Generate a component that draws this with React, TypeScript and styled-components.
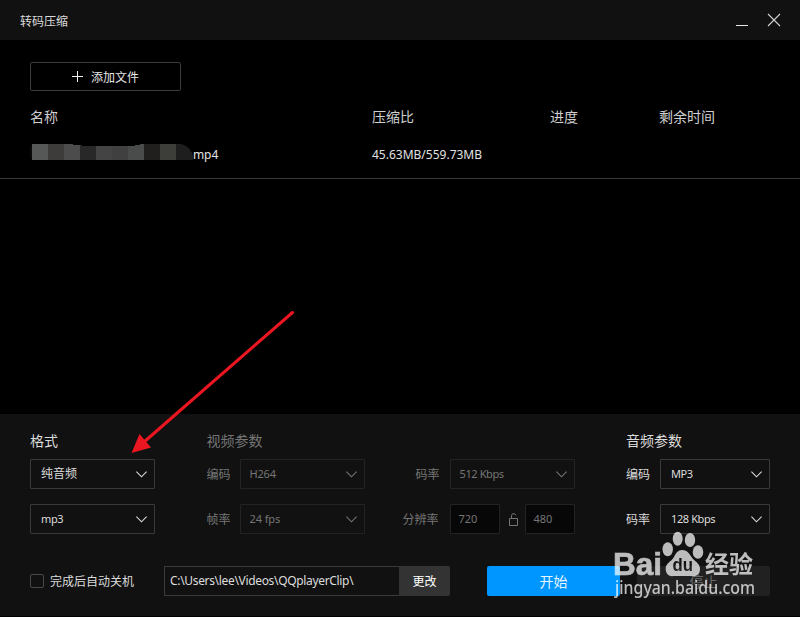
import React from "react";
import styled, { createGlobalStyle } from "styled-components";

const GlobalStyle = createGlobalStyle`
  * { box-sizing: border-box; }
  body {
    margin: 0;
    background: #000;
    font-family: "Noto Sans", "Noto Sans CJK SC", sans-serif;
    font-size: 12px;
    color: #dcdcdc;
  }
`;

const Window = styled.main`
  position: relative;
  display: flex;
  flex-direction: column;
  width: 800px;
  height: 617px;
  overflow: hidden;
  background: #000;
`;

const TitleBar = styled.header`
  display: flex;
  justify-content: space-between;
  align-items: center;
  height: 40px;
  padding: 0 19px 0 20px;
  background: #111;
`;

const Text = styled.span<{ $size?: number; $track?: number; $shift?: number; $cjk?: boolean }>`
  display: block;
  font-family: ${(p) => (p.$cjk ? '"Noto Sans CJK SC"' : '"Noto Sans", "Noto Sans CJK SC"')}, sans-serif;
  font-size: ${(p) => p.$size ?? 12}px;
  line-height: 20px;
  letter-spacing: ${(p) => p.$track ?? 0}px;
  margin-top: ${(p) => p.$shift ?? 0}px;
  white-space: nowrap;
`;

const WindowControls = styled.div`
  display: flex;
  gap: 17px;
`;

const FileArea = styled.section`
  height: 374px;
  padding-top: 22px;
`;

const AddButton = styled.button`
  display: flex;
  align-items: center;
  gap: 8px;
  width: 151px;
  height: 29px;
  margin-left: 30px;
  padding: 0 0 0 41px;
  border: 1px solid #3c3c3c;
  border-radius: 2px;
  background: transparent;
  color: #e6e6e6;
`;

const TableRow = styled.div<{ $head?: boolean }>`
  display: grid;
  grid-template-columns: 342px 178px 109px 1fr;
  align-items: ${(p) => (p.$head ? "center" : "start")};
  height: ${(p) => (p.$head ? 50 : 38)}px;
  padding: ${(p) => (p.$head ? "0 0 0 30px" : "3px 0 0 30px")};
  color: ${(p) => (p.$head ? "#cfcfcf" : "#e2e2e2")};
  border-bottom: ${(p) => (p.$head ? "0" : "1px solid #3a3a3a")};
`;

const FileName = styled.div`
  display: flex;
  align-items: flex-start;
`;

const Settings = styled.section`
  height: 202px;
  padding: 16px 30px 0;
  background: #111;
`;

const Groups = styled.div`
  display: grid;
  grid-template-columns: 125px 368px 144px;
  justify-content: space-between;
`;

const Group = styled.div<{ $disabled?: boolean }>`
  display: flex;
  flex-direction: column;
  color: ${(p) => (p.$disabled ? "#757575" : "#dcdcdc")};
`;

const GroupTitle = styled.div`
  height: 29px;
`;

const Rows = styled.div`
  display: flex;
  flex-direction: column;
  gap: 15px;
`;

const Row = styled.div`
  display: flex;
  justify-content: space-between;
  align-items: center;
  height: 30px;
`;

const Field = styled.div<{ $gap?: number }>`
  display: flex;
  align-items: center;
  gap: ${(p) => p.$gap ?? 9}px;
`;

const SizePair = styled.div`
  display: flex;
  align-items: center;
  width: 125px;
`;

const LockIcon = styled.svg`
  margin: 0 7px 0 9px;
`;

const SelectBox = styled.div<{ $width: number; $disabled?: boolean }>`
  display: flex;
  justify-content: space-between;
  align-items: center;
  width: ${(p) => p.$width}px;
  height: 30px;
  padding: 0 7px 0 ${(p) => (p.$disabled ? 9 : 10)}px;
  border: 1px solid ${(p) => (p.$disabled ? "#232323" : "#3a3a3a")};
  border-radius: 1px;
`;

const NumberBox = styled.div`
  display: flex;
  align-items: center;
  width: 50px;
  height: 30px;
  padding-left: 8px;
  border: 1px solid #232323;
  border-radius: 1px;
  background: #070707;
`;

const Footer = styled.footer`
  display: flex;
  align-items: center;
  height: 30px;
  margin-top: 32px;
`;

const Checkbox = styled.div`
  width: 14px;
  height: 14px;
  margin-right: 6px;
  border: 1px solid #484848;
  border-radius: 2px;
`;

const CheckLabel = styled.div`
  width: 114px;
`;

const PathBox = styled.div`
  display: flex;
  align-items: center;
  width: 235px;
  height: 30px;
  padding-left: 5px;
  border: 1px solid #3a3a3a;
  border-right: 0;
`;

const ActionButton = styled.button<{ $kind: "change" | "start" | "stop" }>`
  display: flex;
  justify-content: center;
  align-items: center;
  height: 30px;
  padding: 0;
  border: 0;
  border-radius: ${(p) => (p.$kind === "change" ? "0 2px 2px 0" : "2px")};
  width: ${(p) => ({ change: 51, start: 133, stop: 133 })[p.$kind]}px;
  margin-left: ${(p) => ({ change: 0, start: 37, stop: 17 })[p.$kind]}px;
  background: ${(p) => ({ change: "#333", start: "#0096ff", stop: "#212121" })[p.$kind]};
  color: ${(p) => ({ change: "#fff", start: "#e6f5ff", stop: "#686868" })[p.$kind]};
`;

const Overlay = styled.svg`
  position: absolute;
  inset: 0;
  pointer-events: none;
`;

const Chevron = () => (
  <svg width="11" height="7" viewBox="0 0 11 7" fill="none" stroke="currentColor" strokeWidth="1.1">
    <path d="M0.4 0.7 5.5 5.8 10.6 0.7" />
  </svg>
);

const Select = ({ value, width, disabled, track }: { value: string; width: number; disabled?: boolean; track?: number }) => (
  <SelectBox $width={width} $disabled={disabled}>
    <Text $size={value === "纯音频" ? 12 : 11} $track={track}>{value}</Text>
    <Chevron />
  </SelectBox>
);

const mosaic = ["#565858", "#3e3c3a", "#4c4c4c", "#282828", "#444444", "#404040", "#4a4c4b", "#201f1d", "#3d3d3a", "#1e1e1e"];

const HiddenName = () => (
  <svg width="163" height="16" viewBox="-2 0 163 16">
    <clipPath id="nameShape">
      <path d="M0 0H41V1H50V2H103V1H108V0H149Q158 2 161 12V16H0Z" />
    </clipPath>
    <path d="M-2 3V14L0 16V0Z" fill="#080909" />
    <g clipPath="url(#nameShape)" shapeRendering="crispEdges">
      {mosaic.map((fill, i) => (
        <rect key={i} x={i * 16} y="0" width={17} height="16" fill={fill} />
      ))}
    </g>
  </svg>
);

export default function App() {
  return (
    <>
      <GlobalStyle />
      <Window>
        <TitleBar>
          <Text $cjk $shift={1}>转码压缩</Text>
          <WindowControls>
            <svg width="15" height="14" viewBox="0 0 15 14" shapeRendering="crispEdges">
              <path d="M1 12.5H13" stroke="#e6e6e6" />
            </svg>
            <svg width="14" height="14" viewBox="0 0 14 14">
              <path d="M1 1 13 13M13 1 1 13" stroke="#d2d2d2" strokeWidth="1.1" />
            </svg>
          </WindowControls>
        </TitleBar>

        <FileArea>
          <AddButton>
            <svg width="11" height="11" viewBox="0 0 11 11" shapeRendering="crispEdges">
              <path d="M0 5.5H11M5.5 0V11" stroke="#f0f0f0" />
            </svg>
            <Text $cjk>添加文件</Text>
          </AddButton>
          <TableRow $head>
            <Text $cjk $size={14}>名称</Text>
            <Text $cjk $size={14}>压缩比</Text>
            <Text $cjk $size={14}>进度</Text>
            <Text $cjk $size={14}>剩余时间</Text>
          </TableRow>
          <TableRow>
            <FileName>
              <HiddenName />
              <Text $track={-0.1} $shift={1}>mp4</Text>
            </FileName>
            <Text $shift={1}>45.63MB/559.73MB</Text>
          </TableRow>
        </FileArea>

        <Settings>
          <Groups>
            <Group>
              <GroupTitle><Text $cjk $size={14}>格式</Text></GroupTitle>
              <Rows>
                <Select value="纯音频" width={125} />
                <Select value="mp3" width={125} track={-0.4} />
              </Rows>
            </Group>
            <Group $disabled>
              <GroupTitle><Text $cjk $size={14}>视频参数</Text></GroupTitle>
              <Rows>
                <Row>
                  <Field>
                    <Text $cjk>编码</Text>
                    <Select value="H264" width={125} disabled track={-0.2} />
                  </Field>
                  <Field $gap={10}>
                    <Text $cjk>码率</Text>
                    <Select value="512 Kbps" width={125} disabled track={-0.4} />
                  </Field>
                </Row>
                <Row>
                  <Field>
                    <Text $cjk>帧率</Text>
                    <Select value="24 fps" width={125} disabled track={-0.1} />
                  </Field>
                  <Field $gap={11}>
                    <Text $cjk>分辨率</Text>
                    <SizePair>
                      <NumberBox><Text $size={11}>720</Text></NumberBox>
                      <LockIcon width="9" height="13" viewBox="0 0 9 13" fill="none" stroke="currentColor">
                        <path d="M0.5 5.5H8.5V12.5H0.5ZM2.5 5.5V2.5L3.5 0.8H5.8L7 2.2" />
                      </LockIcon>
                      <NumberBox><Text $size={11}>480</Text></NumberBox>
                    </SizePair>
                  </Field>
                </Row>
              </Rows>
            </Group>
            <Group>
              <GroupTitle><Text $cjk $size={14}>音频参数</Text></GroupTitle>
              <Rows>
                <Row>
                  <Text $cjk>编码</Text>
                  <Select value="MP3" width={110} track={-0.4} />
                </Row>
                <Row>
                  <Text $cjk>码率</Text>
                  <Select value="128 Kbps" width={110} track={-0.4} />
                </Row>
              </Rows>
            </Group>
          </Groups>

          <Footer>
            <Checkbox />
            <CheckLabel><Text $cjk>完成后自动关机</Text></CheckLabel>
            <PathBox><Text $track={-0.33}>C:\Users\lee\Videos\QQplayerClip\</Text></PathBox>
            <ActionButton $kind="change"><Text $cjk>更改</Text></ActionButton>
            <ActionButton $kind="start"><Text $cjk $size={14}>开始</Text></ActionButton>
            <ActionButton $kind="stop"><Text $cjk $size={14}>停止</Text></ActionButton>
          </Footer>
        </Settings>

        <Overlay width="800" height="617" viewBox="0 0 800 617">
          <path d="M292.5 312.5 144 442" stroke="#ec1620" strokeWidth="3" strokeLinecap="round" />
          <path d="M131.5 453 139.5 434 151 447.5Z" fill="#ec1620" />
          <mask id="pawMask">
            <rect x="600" y="525" width="200" height="92" fill="#fff" />
            <text x="672.5" y="571" textLength="20.5" lengthAdjust="spacingAndGlyphs" fontFamily="Liberation Sans" fontWeight="700" fontSize="18" fill="#000">du</text>
          </mask>
          <g fill="#fff" opacity="0.72">
            <text x="613" y="574.7" textLength="49" lengthAdjust="spacingAndGlyphs" fontFamily="Liberation Sans" fontWeight="700" fontSize="32" stroke="#fff" strokeWidth="0.6">Bai</text>
            <ellipse cx="667.7" cy="549.3" rx="5.2" ry="7" />
            <ellipse cx="677.7" cy="538.7" rx="5" ry="7" />
            <ellipse cx="690" cy="540" rx="5.2" ry="7" />
            <ellipse cx="698" cy="552" rx="5.3" ry="6.7" />
            <path mask="url(#pawMask)" d="M682 550C688 550 690 555 693 559C697 563 700 564 700 569C700 575 696 577 691 576H674C668 577 665.5 573 665.7 568C666 563 671 562 674 557C676 553 678 550 682 550Z" />
            <text x="705" y="573" textLength="48" fontFamily="Noto Sans CJK SC" fontWeight="700" fontSize="24">经验</text>
            <text x="615" y="594" textLength="140" lengthAdjust="spacingAndGlyphs" fontFamily="Noto Sans" fontWeight="500" fontSize="18">jingyan.baidu.com</text>
          </g>
        </Overlay>
      </Window>
    </>
  );
}
